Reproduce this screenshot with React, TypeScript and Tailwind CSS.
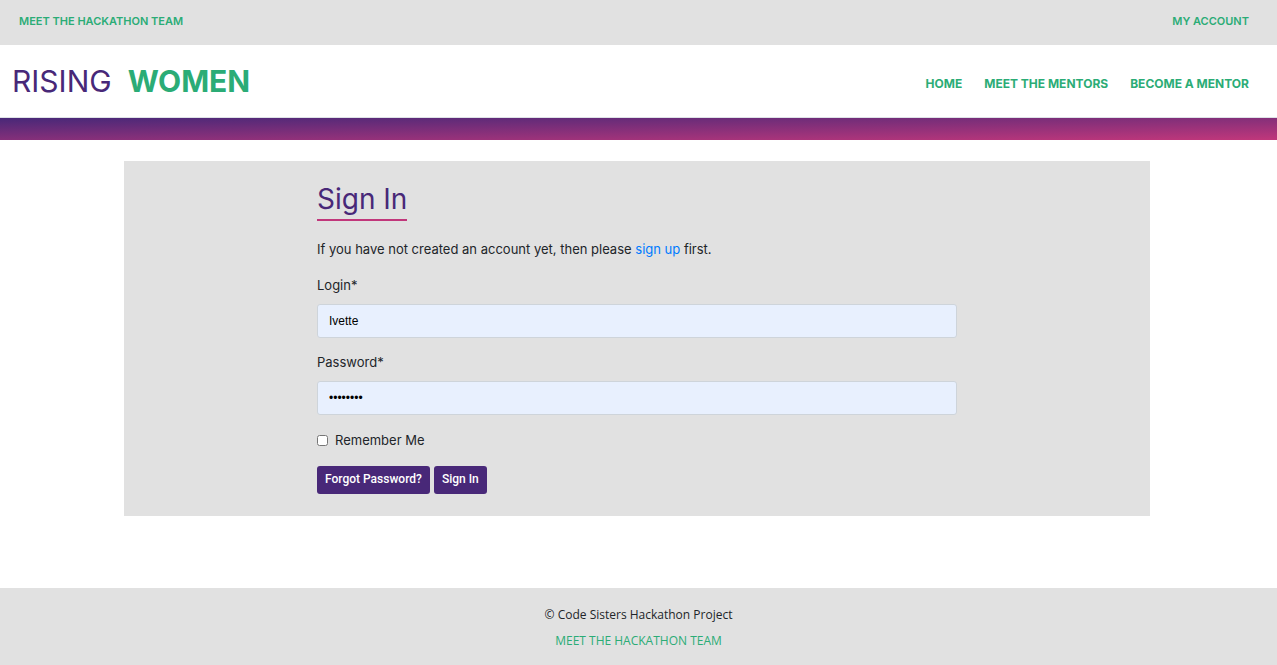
const navLink = 'text-[#2bac76] hover:underline';

function TopBar() {
  return (
    <div className="flex h-[45px] items-center justify-between bg-[#e1e1e1] pb-[3px] pl-[19px] pr-7 font-['Inter',sans-serif] text-[11px] font-semibold leading-4">
      <a href="#team" className={navLink}>MEET THE HACKATHON TEAM</a>
      <a href="#account" className={navLink}>MY ACCOUNT</a>
    </div>
  );
}

function Header() {
  return (
    <header>
      <div className="flex h-[73px] items-center justify-between border-b border-[#dee2e6] pl-3 pr-7 font-['Inter',sans-serif]">
        <a href="#home" className="flex gap-4 text-[30px] leading-8">
          <span className="text-[#482878]">RISING</span>
          <span className="font-bold text-[#2bac76]">WOMEN</span>
        </a>
        <nav className="flex gap-[22px] pt-[6px] text-xs font-bold">
          <a href="#home" className={navLink}>HOME</a>
          <a href="#mentors" className={navLink}>MEET THE MENTORS</a>
          <a href="#become" className={navLink}>BECOME A MENTOR</a>
        </nav>
      </div>
      <div className="h-[22px] bg-[linear-gradient(to_bottom_right,#482878,#c1377b)]" />
    </header>
  );
}

const field =
  "mt-[9px] block h-[34px] w-full rounded-[3px] border border-[#ced4da] bg-[#e8f0fe] px-[11px] font-['Liberation_Sans',sans-serif] text-xs text-black";
const button =
  "h-7 rounded-[3px] bg-[#482878] px-2 pb-[2px] font-['Roboto',sans-serif] text-[12px] font-medium text-white";

function SignIn() {
  return (
    <section className="bg-[#e1e1e1] px-6 pb-[22px] pt-[22px]">
      <form className="mx-auto max-w-[640px] font-['Inter',sans-serif] text-[13px] leading-5 text-[#212529]">
        <h1 className="w-fit border-b-2 border-[#c1377b] pb-[3px] text-[28px] leading-[33px] text-[#482878]">
          Sign In
        </h1>
        <p className="mt-[18px]">
          If you have not created an account yet, then please{' '}
          <a href="#signup" className="text-[#007bff] hover:underline">sign up</a> first.
        </p>
        <div className="mt-4">
          <label htmlFor="login">Login*</label>
          <input id="login" type="text" defaultValue="Ivette" className={field} />
        </div>
        <div className="mt-[14px]">
          <label htmlFor="password">Password*</label>
          <input id="password" type="password" defaultValue="password" className={field} />
        </div>
        <div className="mt-[15px] flex items-center gap-[7px]">
          <input id="remember" type="checkbox" className="size-[11px]" />
          <label htmlFor="remember">Remember Me</label>
        </div>
        <div className="mt-4 flex gap-1">
          <button type="button" className={button}>Forgot Password?</button>
          <button type="submit" className={button}>Sign In</button>
        </div>
      </form>
    </section>
  );
}

export default function App() {
  return (
    <div className="flex min-h-screen flex-col bg-white">
      <TopBar />
      <Header />
      <main className="grow pb-[72px] pl-[124px] pr-[127px] pt-[21px]">
        <SignIn />
      </main>
      <footer className="flex flex-col items-center gap-2 bg-[#e1e1e1] pb-[15px] pt-[18px] font-['Open_Sans',sans-serif] text-xs leading-[18px] text-[#212529]">
        <p>© Code Sisters Hackathon Project</p>
        <a href="#team" className={navLink}>MEET THE HACKATHON TEAM</a>
      </footer>
    </div>
  );
}
